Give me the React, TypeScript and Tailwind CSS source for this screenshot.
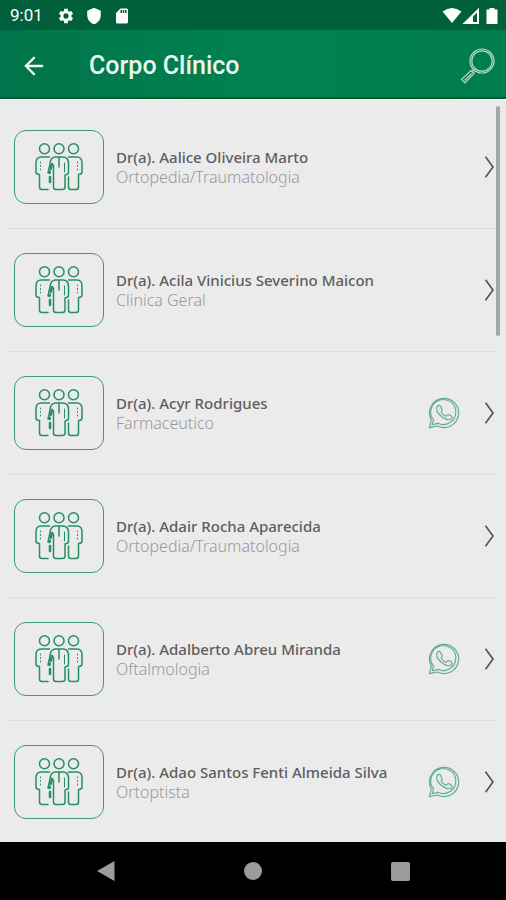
import { ArrowLeft } from "lucide-react";
import { MdSdCard, MdSettings, MdShield } from "react-icons/md";

type Doctor = {
  name: string;
  specialty: string;
  whatsapp?: boolean;
};

const doctors: Doctor[] = [
  { name: "Dr(a). Aalice Oliveira Marto", specialty: "Ortopedia/Traumatologia" },
  { name: "Dr(a). Acila Vinicius Severino Maicon", specialty: "Clinica Geral" },
  { name: "Dr(a). Acyr Rodrigues", specialty: "Farmaceutico", whatsapp: true },
  { name: "Dr(a). Adair Rocha Aparecida", specialty: "Ortopedia/Traumatologia" },
  { name: "Dr(a). Adalberto Abreu Miranda", specialty: "Oftalmologia", whatsapp: true },
  { name: "Dr(a). Adao Santos Fenti Almeida Silva", specialty: "Ortoptista", whatsapp: true },
];

export default function App() {
  return (
    <div className="flex h-screen flex-col overflow-hidden bg-[#ebebeb] font-['Roboto',sans-serif]">
      <StatusBar />
      <Header />
      <main className="relative min-h-0 flex-1 overflow-hidden border-t border-white pt-1.5">
        <ul className="px-2">
          {doctors.map((doctor) => (
            <DoctorRow key={doctor.name} doctor={doctor} />
          ))}
        </ul>
        <div className="absolute top-1.5 right-1.5 h-[230px] w-1 rounded-full bg-[#a6a6a6]" />
      </main>
      <NavBar />
    </div>
  );
}

function StatusBar() {
  return (
    <div className="flex h-[30px] shrink-0 items-center bg-[#00603b] pt-0.5 pr-2 pl-2.5 text-white">
      <span className="w-[47px] text-[17px]">9:01</span>
      <div className="flex gap-2.5">
        <MdSettings size={18} />
        <MdShield size={18} />
        <MdSdCard size={18} />
      </div>
      <svg className="ml-auto" width="56" height="18" viewBox="0 0 56 18" fill="currentColor">
        <path d="M.5 4.500Q10-2.500 19.500 4.500L10 16z" />
        <path fillRule="evenodd" d="M20.500 17 37 .8V17zM31 9.500V15h4V5.500z" />
        <path d="M47.500 1h5v1.500H55q.5 0 .5.500v13.500q0 .5-.5.500H45q-.5 0-.5-.5V3q0-.5.5-.5h2.500z" />
      </svg>
    </div>
  );
}

function Header() {
  return (
    <header className="flex h-[69px] shrink-0 items-center border-b-2 border-[#005c2c] bg-linear-to-r from-[#00744a] via-[#008250] to-[#007d4e] pt-1 pr-2.5 pl-5 text-[#eef5ee]">
      <button type="button" aria-label="Voltar" className="w-[69px]">
        <ArrowLeft size={28} strokeWidth={2} />
      </button>
      <h1 className="text-[25px] font-medium">Corpo Clínico</h1>
      <button type="button" aria-label="Buscar" className="ml-auto">
        <SearchIcon />
      </button>
    </header>
  );
}

function DoctorRow({ doctor }: { doctor: Doctor }) {
  return (
    <li className="border-b border-[#dcdcdc]">
      <a href="#" className="flex h-[122px] items-center pl-1.5">
        <span className="flex h-[74px] w-[90px] shrink-0 items-center justify-center rounded-xl border border-[#3d9a73]">
          <PeopleIcon />
        </span>
        <span className="ml-3 min-w-0 flex-1 font-['Noto_Sans',sans-serif]">
          <span className="block text-[15px] leading-5 font-medium text-[#5e5e5e]">{doctor.name}</span>
          <span className="block text-base leading-5 font-light text-[#999]">{doctor.specialty}</span>
        </span>
        {doctor.whatsapp && <WhatsappIcon />}
        <ChevronIcon />
      </a>
    </li>
  );
}

function NavBar() {
  return (
    <nav className="flex h-[58px] shrink-0 items-center justify-around bg-black px-8 text-[#9c9c9c]">
      <button type="button" aria-label="Voltar">
        <svg width="20" height="22" viewBox="0 0 20 22" fill="currentColor">
          <path d="M1 11 18.500 1v20z" />
        </svg>
      </button>
      <button type="button" aria-label="Início" className="size-[18px] rounded-full bg-[#9c9c9c]" />
      <button type="button" aria-label="Recentes" className="size-[19px] rounded-xs bg-[#9c9c9c]" />
    </nav>
  );
}

function SearchIcon() {
  return (
    <svg width="36" height="36" viewBox="0 0 36 36" fill="none" stroke="#b4d9c4" strokeWidth="1.200">
      <circle cx="22" cy="13" r="12" />
      <circle cx="22" cy="13" r="10.200" />
      <path d="M13.500 21.500 11.500 23.500M15 23l-1.500 2M11 22.500l3 3L5 35 1.500 31.500zM11.500 25.500 4.500 32.500" />
    </svg>
  );
}

function PeopleIcon() {
  return (
    <svg width="48" height="48" viewBox="0 0 48 48" fill="none" stroke="#268f63" strokeWidth="1.500" strokeLinecap="round" strokeLinejoin="round">
      <circle cx="9.500" cy="5.800" r="5" />
      <circle cx="24" cy="5.800" r="5" />
      <circle cx="38.500" cy="5.800" r="5" />
      {/* left */}
      <path d="M14.500 14H6Q1 14 1 20v9q0 2.500 3.500 2.500V44q0 2.500 2.500 2.500h6" />
      <path d="M5.500 19v10" strokeWidth="1" strokeDasharray="1 2.500" />
      {/* middle */}
      <path d="M20 14h8.500q5 .5 5 6.500v9q0 2-3.500 2.500V44q0 2.500-2.500 2.500h-6.500q-2.500 0-2.500-2.500V22M20 14q-4.500.5-5 7L13 30M24 14v10" />
      <path d="M29.500 20v9" strokeWidth="1" />
      <path d="M17 21 14.500 30M15 34v8" strokeWidth="2.500" strokeDasharray="5 3" />
      {/* right */}
      <path d="M33.500 14H42q5 0 5 6v9q0 2.500-3.500 2.500V44q0 2.500-2.500 2.500h-5q-2.500 0-2.500-2.500V34" />
      <path d="M42.500 19v10" strokeWidth="1" strokeDasharray="1 2.500" />
    </svg>
  );
}

function WhatsappIcon() {
  return (
    <svg className="mr-6 shrink-0" width="32" height="32" viewBox="0 0 34 34" fill="#e0ebe6" stroke="#62ab8e" strokeWidth="1.200" strokeLinejoin="round">
      <path d="M1.500 32.500 3.500 24.500A15.500 15.500 0 1 1 10 30.800z" />
      <path d="M4.500 29.500 6 24.500A13.300 13.300 0 1 1 10.500 28z" fill="#ebebeb" />
      <path d="M10 9.500q2-1.500 3.500.5l1.500 3.500q.3 1-1 2.500 2 3.500 5 4.500l1.800-1.500q1-.5 2 0l2.500 1.500q1 1-.3 2.500-2.500 2-6 .5-6-2.500-9.500-8.500-1.200-3 .5-5z" />
    </svg>
  );
}

function ChevronIcon() {
  return (
    <svg className="mr-1 shrink-0" width="10" height="22" viewBox="0 0 10 22" fill="none" stroke="#555" strokeWidth="1.700">
      <path d="M1.500.8 9 11 1.500 21.200" />
    </svg>
  );
}
